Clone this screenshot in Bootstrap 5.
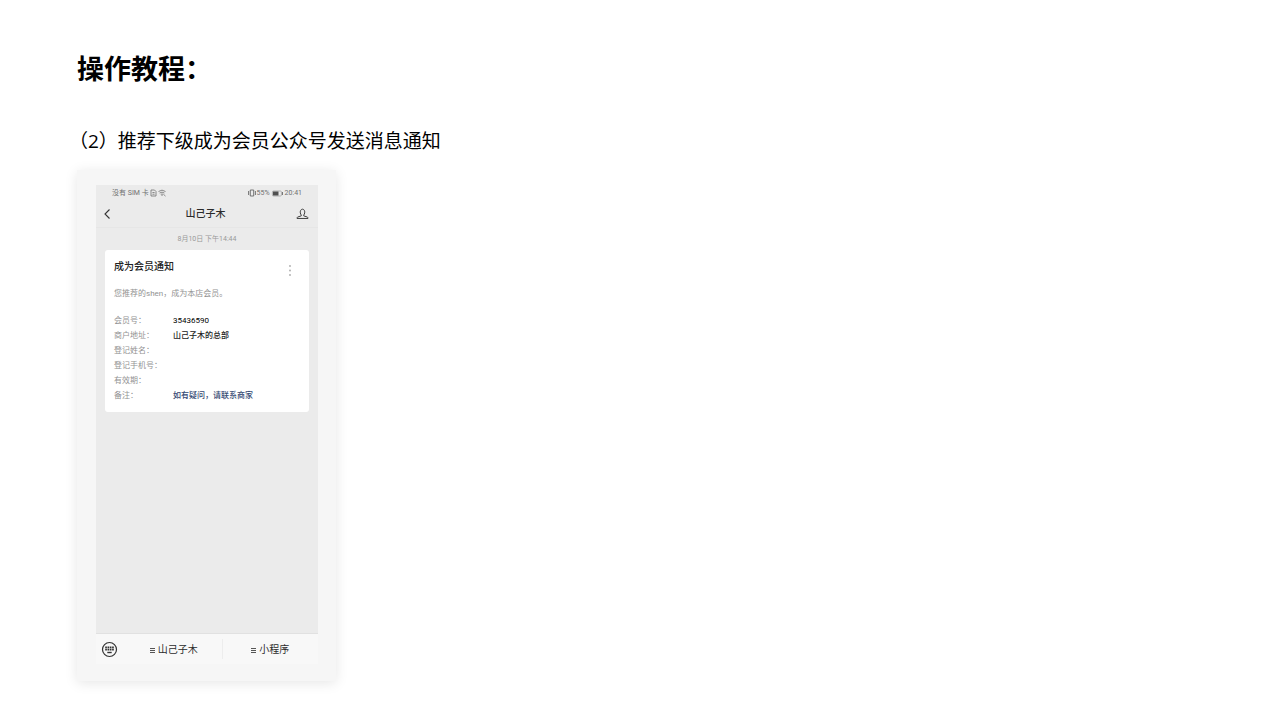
<!DOCTYPE html>
<html lang="zh-CN">
<head>
<meta charset="utf-8">
<meta name="viewport" content="width=device-width, initial-scale=1">
<title>操作教程</title>
<link href="https://cdn.jsdelivr.net/npm/bootstrap@5.3.0/dist/css/bootstrap.min.css" rel="stylesheet">
<style>
body{font-family:"Open Sans","Noto Sans CJK SC",sans-serif;color:#000;background:#fff}
.tutorial{padding:49px 72px 39px 77px}
.tutorial h1{font-size:27px;line-height:38px;font-family:"Noto Sans CJK SC",sans-serif}
.tutorial h2{font-size:19px;line-height:28px;margin:40px 0 15px -8px}
.phone-frame{width:259px;padding:15px 18px 17px 19px;background:#f6f6f6;box-shadow:0 2px 12px rgba(0,0,0,.1)}
.phone{background:#ebebeb;font-family:Roboto,"Noto Sans CJK SC",sans-serif;color:#2b2b2b}
.statusbar{font-size:7px;line-height:16px;padding:0 16px;color:#707070}
.status-icons{gap:1px}
.titlebar{padding:0 9px 0 7px;height:27px;border-bottom:1px solid #e6e6e6}
.titlebar h3{font-size:10px;line-height:14px;font-weight:500}
.chat{padding:6px 9px 221px}
.chat time{font-size:7px;line-height:10px;color:#999}
.notice{background:#fff;border-radius:3px;margin-top:6px;padding:9px 9px 10px;font-size:8px;line-height:12px;color:#929292}
.notice h4{font-size:10px;line-height:15px;color:#222}
.notice p{margin:11px 0 15px}
.notice dl{display:grid;grid-template-columns:59px 1fr;row-gap:3px}
.notice dt{font-weight:400}
.notice dd{margin:0;color:#222;font-weight:500}
.notice dd.number{font-weight:400;color:#000}
.notice dd.remark{color:#354a73}
.bare{background:none;border:0;padding:0;color:inherit;line-height:1}
.menubar{background:#f8f8f8;border-top:1px solid #e1e1e1;height:31px;padding:0 0 0 5px}
.menubar button{font-size:10px}
.menubar .divided{border-right:1px solid #ededed;height:20px}
.menu-label{gap:3px;padding-top:2px}
svg{display:block}
</style>
</head>
<body>
<main class="tutorial">
<h1 class="fw-bold m-0">操作教程：</h1>
<h2 class="fw-normal">（2）推荐下级成为会员公众号发送消息通知</h2>
<div class="phone-frame">
<section class="phone d-flex flex-column">
<div class="statusbar d-flex justify-content-between">
<div class="status-icons d-flex align-items-center"><span>没有 SIM 卡</span>
<svg width="7" height="8" viewBox="0 0 7 8" fill="none" stroke="#707070" stroke-width=".8"><path d="M1 1h3.5L6 2.5V7H1zM2.4 3.5h2.2M2.4 5.2h2.2"/></svg>
<svg width="8" height="8" viewBox="0 0 8 8" fill="none" stroke="#707070" stroke-width=".8"><path d="M.5 2.5q3.5-2.7 7 0M1.6 4q2.4-1.7 4.8 0M2.8 5.4q1.2-.8 2.4 0M4 6v1M5.5 5.3l2 1.8"/></svg></div>
<div class="status-icons d-flex align-items-center"><svg width="8" height="8" viewBox="0 0 8 8" fill="none" stroke="#666" stroke-width=".9"><path d="M2.300 1h3.400v6H2.300zM.6 2v4M7.400 2v4"/></svg><span>55%</span>
<svg class="flex-shrink-0" width="13" height="7" viewBox="0 0 13 7"><rect x="1.400" y="1" width="9" height="5" rx="1" fill="none" stroke="#999" stroke-width=".7"/><path d="M2 1.5h5.5v4H2z" fill="#505050"/><path d="M11.500 2v3" stroke="#777"/></svg><span>20:41</span></div>
</div>
<header class="titlebar d-flex align-items-center justify-content-between">
<button class="bare" aria-label="返回"><svg width="12" height="10" viewBox="0 0 12 10" fill="none" stroke="#333" stroke-width="1.100"><path d="M6.500.5 2 5l4.500 4.500"/></svg></button>
<h3 class="m-0">山己子木</h3>
<button class="bare" aria-label="联系人"><svg width="13" height="12" viewBox="0 0 14 12" fill="none" stroke="#333"><path d="M5.700 7.200C3.400 4 5 .8 7 .8S10.600 4 8.300 7.200v.8l4 1.300q.6.400.6 1.500H1.100q0-1.100.6-1.500l4-1.300z"/></svg></button>
</header>
<div class="chat">
<time class="d-block text-center">8月10日 下午14:44</time>
<article class="notice">
<div class="d-flex justify-content-between"><h4 class="m-0">成为会员通知</h4>
<button class="bare me-2 mt-1" aria-label="更多"><svg width="4" height="14" viewBox="0 0 4 14" fill="#aaa"><circle cx="2" cy="3" r=".9"/><circle cx="2" cy="7.500" r=".9"/><circle cx="2" cy="12" r=".9"/></svg></button></div>
<p>您推荐的shen，成为本店会员。</p>
<dl class="mb-0">
<dt>会员号：</dt><dd class="number">35436590</dd>
<dt>商户地址：</dt><dd>山己子木的总部</dd>
<dt>登记姓名：</dt><dd></dd>
<dt>登记手机号：</dt><dd></dd>
<dt>有效期：</dt><dd></dd>
<dt>备注：</dt><dd class="remark">如有疑问，请联系商家</dd>
</dl>
</article>
</div>
<footer class="menubar d-flex align-items-center">
<button class="bare" aria-label="键盘"><svg width="17" height="17" viewBox="0 0 17 17"><circle cx="8.500" cy="8.500" r="7" fill="none" stroke="#333" stroke-width="1.200"/><path d="M4.200 6.300h8.600M4.200 8.700h8.600" stroke="#333" stroke-width="1.700" stroke-dasharray="1.700 .6"/><path d="M6.300 11.500h4.400" stroke="#333" stroke-width="1.400"/></svg></button>
<button class="bare divided menu-label col ps-2 d-flex align-items-center justify-content-center"><svg width="5" height="5" viewBox="0 0 5 5" stroke="#555" shape-rendering="crispEdges"><path d="M0 .5h5M0 2.500h5M0 4.500h5"/></svg>山己子木</button>
<button class="bare menu-label col d-flex align-items-center justify-content-center"><svg width="5" height="5" viewBox="0 0 5 5" stroke="#555" shape-rendering="crispEdges"><path d="M0 .5h5M0 2.500h5M0 4.500h5"/></svg>小程序</button>
</footer>
</section>
</div>
</main>
<script src="https://cdn.jsdelivr.net/npm/bootstrap@5.3.0/dist/js/bootstrap.bundle.min.js"></script>
</body>
</html>
